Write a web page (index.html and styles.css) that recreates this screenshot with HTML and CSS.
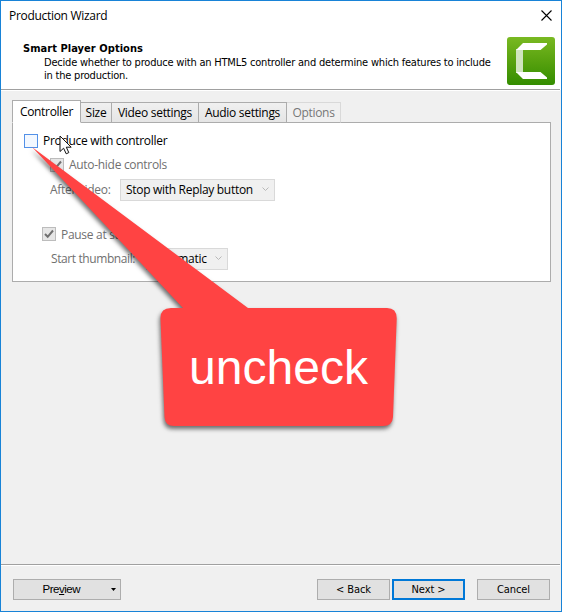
FILE: index.html
```html
<!DOCTYPE html>
<html lang="en">
<head>
<meta charset="utf-8">
<title>Production Wizard</title>
<link rel="stylesheet" href="styles.css">
</head>
<body>
<div class="window">
  <div class="titlebar">
    <span class="title">Production Wizard</span>
    <svg class="close" width="11" height="11" viewBox="0 0 11 11"><path d="M.5 .5l10 10M10.500 .5l-10 10" stroke="#000" stroke-width="1.100" fill="none"/></svg>
  </div>
  <header class="header">
    <div class="heading">
      <h1>Smart Player Options</h1>
      <p><span class="line1">Decide whether to produce with an HTML5 controller and determine which features to include</span><br><span class="line2">in the production.</span></p>
    </div>
    <svg class="logo" width="48" height="48" viewBox="0 0 48 48">
      <defs><linearGradient id="green" x1="0" y1="0" x2="0" y2="1"><stop offset="0" stop-color="#79b922"/><stop offset=".5" stop-color="#58a20f"/><stop offset="1" stop-color="#348d00"/></linearGradient></defs>
      <rect width="48" height="48" rx="3" fill="url(#green)"/>
      <path d="M9 12h7v24H9z" fill="#d0e4bf"/>
      <path d="M16 6h24v1.500L33.500 13H9zM9 35h24.500L40 40.500V42H16z" fill="#fff"/>
    </svg>
  </header>
  <main class="content">
    <nav class="tabs">
      <div class="tab active"><span>Controller</span></div>
      <div class="tab size"><span>Size</span></div>
      <div class="tab video"><span>Video settings</span></div>
      <div class="tab audio"><span>Audio settings</span></div>
      <div class="tab options"><span>Options</span></div>
    </nav>
    <section class="panel">
      <div class="row produce"><i class="box hot"></i><span>Produce with controller</span></div>
      <div class="row autohide"><i class="box"><svg width="12" height="12" viewBox="0 0 12 12"><path d="M2 6l2.700 2.800L10 2.500" fill="none" stroke="#707070" stroke-width="2"/></svg></i><span>Auto-hide controls</span></div>
      <div class="row after"><span class="t-after">After video:</span><div class="select stop"><span>Stop with Replay button</span><svg width="7" height="5" viewBox="0 0 7 5"><path d="M.5 .5l3 3 3-3" fill="none" stroke="#b8b8b8"/></svg></div></div>
      <div class="row pause"><i class="box"><svg width="12" height="12" viewBox="0 0 12 12"><path d="M2 6l2.700 2.800L10 2.500" fill="none" stroke="#707070" stroke-width="2"/></svg></i><span>Pause at start</span></div>
      <div class="row start"><span class="t-start">Start thumbnail:</span><div class="select auto"><span>Automatic</span><svg width="7" height="5" viewBox="0 0 7 5"><path d="M.5 .5l3 3 3-3" fill="none" stroke="#b8b8b8"/></svg></div></div>
    </section>
  </main>
  <footer class="footer">
    <div class="btn preview"><span>Pre<u>v</u>iew</span><svg width="5" height="3" viewBox="0 0 5 3"><path d="M0 0h5L2.500 3z"/></svg></div>
    <div class="btn back"><span>&lt; Back</span></div>
    <div class="btn next"><span>Next &gt;</span></div>
    <div class="btn cancel"><span>Cancel</span></div>
  </footer>
  <svg class="cursor" width="14" height="20" viewBox="0 0 14 20"><path d="M1 1v15.500l3.600-3.300 2.600 5.600 2.600-1.200-2.500-5.400h4.900z" fill="#fff" stroke="#111"/></svg>
  <svg class="callout" width="400" height="310" viewBox="0 0 400 310">
    <path d="M32 28L248 189H387Q397 189 396.700 200L393 298Q392.500 307 383 307H174Q165 307 164.500 298L160.500 200Q160 189 171 189H183Z" fill="#ff4343"/>
  </svg>
  <div class="callout-text"><span>uncheck</span></div>
</div>
</body>
</html>
```
FILE: styles.css
```css
* { box-sizing: border-box; }
body { margin: 0; font-family: "Open Sans", "Noto Sans", sans-serif; font-size: 12px; letter-spacing: -.3px; color: #000; }
svg { display: block; flex: none; }
span { white-space: nowrap; }
.window { position: relative; width: 562px; height: 612px; border: 1px solid #1883d7; background: #f0f0f0; display: flex; flex-direction: column; overflow: hidden; }
.titlebar { height: 29px; background: #fff; display: flex; align-items: center; justify-content: space-between; padding: 0 9px 0 8px; }
.header { height: 60px; margin-right: 1px; background: #fff; border-bottom: 1px solid #a0a0a0; box-shadow: 0 1px #fff, 1px 0 #fff; display: flex; justify-content: space-between; align-items: flex-start; padding: 7px 5px 0 22px; }
.heading { font-family: "DejaVu Sans Condensed", "DejaVu Sans", sans-serif; font-size: 11px; letter-spacing: -.21px; padding-top: 5px; }
h1 { margin: 0; font-size: 11px; line-height: 14px; letter-spacing: .05px; }
p { margin: 0 0 0 21px; line-height: 13px; }
.content { height: 475px; padding: 10px 10px 0 11px; border-bottom: 1px solid #a0a0a0; box-shadow: 0 1px #fff; margin-right: 1px; }
.tabs { display: flex; align-items: flex-end; height: 23px; position: relative; }
.tab { height: 21px; border: 1px solid #acacac; background: linear-gradient(#f0f0f0, #e5e5e5); display: flex; align-items: center; justify-content: center; }
.tab.active { width: 69px; height: 23px; background: #fff; border-bottom-color: #fff; padding-bottom: 1px; }
.size { width: 31px; border-left: 0; }
.video { width: 87px; border-left: 0; }
.audio { width: 88px; border-left: 0; }
.options { width: 54px; border-color: #d9d9d9; border-left: 0; border-bottom-color: #acacac; background: #f0f0f0; color: #777; }
.panel { height: 160px; width: 539px; border: 1px solid #acacac; margin-top: -1px; background: #fff; padding-top: 6px; }
.row { display: flex; align-items: center; height: 24px; color: #707070; }
.produce { color: #000; padding-left: 11px; }
.produce span, .autohide span { margin-top: -2px; }
.autohide { padding-left: 37px; }
.after { padding-left: 37px; height: 25px; }
.pause { padding-left: 29px; margin-top: 20px; }
.start { padding-left: 38px; height: 25px; }
.box { width: 14px; height: 14px; border: 1px solid #bcbcbc; background: #e6e6e6; margin-right: 5px; flex: none; }
.box.hot { border-color: #5391e8; background: #f3f8ff; }
.select { height: 22px; border: 1px solid #d9d9d9; background: #f0f0f0; color: #000; display: flex; align-items: center; justify-content: space-between; padding: 0 5px; }
.t-after { width: 70px; }
.t-start { width: 95px; letter-spacing: -.4px; }
.stop { width: 155px; }
.auto { width: 82px; }
.footer { display: flex; padding: 14px 0 0 12px; }
.btn { height: 21px; border: 1px solid #adadad; background: #e1e1e1; display: flex; align-items: center; justify-content: center; font-family: "DejaVu Sans Condensed", sans-serif; font-size: 11px; letter-spacing: -.1px; }
.preview { width: 108px; margin-right: 196px; font-family: "Liberation Sans", sans-serif; font-size: 11.5px; letter-spacing: -.5px; justify-content: flex-end; padding: 0 4px 2px 0; }
.preview svg { margin: 2px 0 0 31px; }
.back { width: 73px; }
.next { width: 73px; border: 2px solid #0078d7; margin: 0 12px 0 2px; }
.cancel { width: 73px; }
.cursor { position: absolute; left: 58px; top: 134px; }
.callout { position: absolute; left: -1px; top: 118px; width: 400px; height: 310px; overflow: visible; filter: drop-shadow(-1px 3px 2px rgba(0,0,0,.55)); }
.callout-text { position: absolute; left: 160px; top: 307px; width: 235px; height: 118px; display: flex; align-items: center; justify-content: center; color: #fff; font: 48px "Liberation Sans", sans-serif; letter-spacing: 0; }
```
